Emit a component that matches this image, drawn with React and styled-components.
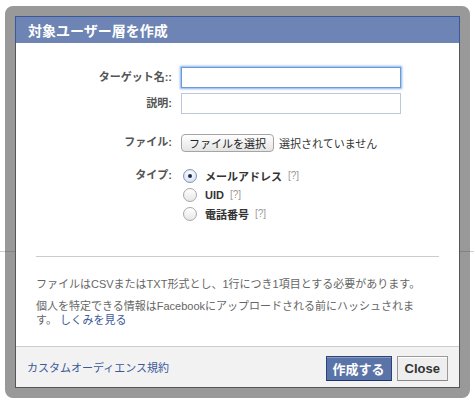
import styled, { createGlobalStyle } from "styled-components";

const GlobalStyle = createGlobalStyle`
    html, body {
        margin: 0;
        padding: 0;
    }
    body {
        width: 474px;
        height: 404px;
        overflow: hidden;
        background: linear-gradient(
            to bottom,
            #fff 251px, #cfcfcf 251px, #cfcfcf 252px, #fff 252px
        );
        font-family: "Liberation Sans", "Noto Sans CJK JP", sans-serif;
        font-size: 11px;
        color: #333;
    }
`

const Page = styled.div`
    padding: 6px 4px 6px 5px;
`
const Frame = styled.div`
    border: 10px solid rgba(70, 70, 70, 0.55);
    border-radius: 8px;
`
const Dialog = styled.div`
    height: 372px;
    box-sizing: border-box;
    display: flex;
    flex-direction: column;
    background: #fff;
    border: 1px solid #555;
    border-top: 0;
`
const Header = styled.div`
    height: 27px;
    box-sizing: border-box;
    margin: 0 -1px;
    padding: 0 12px;
    display: flex;
    align-items: center;
    background: #6d84b4;
    border: 1px solid #3b5998;
    border-bottom: 0;
    color: #fff;
    font-size: 14px;
    font-weight: bold;
`
const Body = styled.div`
    flex: 1;
    padding: 24px 20px 0;
`
const Row = styled.div`
    display: grid;
    grid-template-columns: 136px 1fr;
    column-gap: 9px;
    align-items: ${(p) => (p.$top ? "start" : "center")};
    margin-top: ${(p) => p.$gap || 0}px;
`
const Label = styled.label`
    text-align: right;
    font-weight: bold;
    color: #555;
    line-height: 19px;
`
const Input = styled.input`
    width: 220px;
    height: 21px;
    box-sizing: border-box;
    margin: 0;
    padding: 2px 3px;
    border: 1px solid ${(p) => (p.$focus ? "#6b9ad6" : "#bdc7d8")};
    box-shadow: ${(p) => (p.$focus ? "0 0 2px 1px rgba(90, 150, 225, 0.75)" : "none")};
    outline: none;
    font: inherit;
`
const FileLine = styled.div`
    display: flex;
    align-items: center;
    gap: 5px;
`
const FileButton = styled.button`
    width: 93px;
    height: 18px;
    padding: 0;
    border: 1px solid #a5a5a5;
    border-radius: 4px;
    background: linear-gradient(#ffffff, #e4e4e4);
    font: inherit;
    color: #222;
`
const Options = styled.div`
    display: flex;
    flex-direction: column;
`
const Option = styled.div`
    height: 19px;
    display: flex;
    align-items: center;
    padding-left: 2px;
    font-weight: bold;
    color: #333;
`
const Radio = styled.span`
    width: 14px;
    height: 14px;
    box-sizing: border-box;
    margin-right: 8px;
    border-radius: 50%;
    display: flex;
    align-items: center;
    justify-content: center;
    border: 1px solid ${(p) => (p.$on ? "#7f95bd" : "#a8a8a8")};
    background: ${(p) =>
        p.$on
            ? "radial-gradient(circle at 50% 35%, #ffffff, #c9d8ee)"
            : "linear-gradient(#ffffff, #e6e6e6)"};
    &::after {
        content: "";
        display: ${(p) => (p.$on ? "block" : "none")};
        width: 4px;
        height: 4px;
        border-radius: 50%;
        background: #1e2a44;
    }
`
const Help = styled.span`
    margin-left: 6px;
    font-size: 10px;
    font-weight: normal;
    color: #999;
`
const Divider = styled.hr`
    margin: 33px 0 0;
    border: 0;
    border-top: 1px solid #cccccc;
`
const Note = styled.p`
    max-width: 390px;
    margin: ${(p) => p.$gap}px 0 0;
    line-height: 14px;
    color: #666;
`
const Link = styled.a`
    color: #3b5998;
    text-decoration: none;
    cursor: pointer;
`
const Footer = styled.div`
    height: 41px;
    box-sizing: border-box;
    padding: 0 11px;
    display: flex;
    align-items: center;
    justify-content: space-between;
    background: #f2f2f2;
    border-top: 1px solid #cccccc;
`
const Buttons = styled.div`
    display: flex;
    gap: 5px;
    padding-top: 2px;
`
const Button = styled.button`
    height: 25px;
    padding: 0 ${(p) => (p.$primary ? 6 : 7)}px;
    font: inherit;
    font-size: 13px;
    font-weight: bold;
    border: 1px solid ${(p) => (p.$primary ? "#29447e" : "#999")};
    border-bottom-color: ${(p) => (p.$primary ? "#1a356e" : "#888")};
    background: ${(p) => (p.$primary ? "#5b74a8" : "#eeeeee")};
    color: ${(p) => (p.$primary ? "#fff" : "#333")};
    box-shadow: inset 0 1px 0 ${(p) => (p.$primary ? "#8a9cc2" : "#fff")};
    cursor: pointer;
`

const types = [
    { name: "メールアドレス", on: true },
    { name: "UID" },
    { name: "電話番号" },
]

const App = () => {
    return (
        <Page>
            <GlobalStyle />
            <Frame>
                <Dialog>
                    <Header>対象ユーザー層を作成</Header>
                    <Body>
                        <Row>
                            <Label>ターゲット名::</Label>
                            <Input $focus />
                        </Row>
                        <Row $gap={5}>
                            <Label>説明:</Label>
                            <Input />
                        </Row>
                        <Row $gap={19}>
                            <Label>ファイル:</Label>
                            <FileLine>
                                <FileButton>ファイルを選択</FileButton>
                                <span>選択されていません</span>
                            </FileLine>
                        </Row>
                        <Row $gap={14} $top>
                            <Label>タイプ:</Label>
                            <Options>
                                {types.map((t) => (
                                    <Option key={t.name}>
                                        <Radio $on={t.on} />
                                        {t.name}
                                        <Help>[?]</Help>
                                    </Option>
                                ))}
                            </Options>
                        </Row>
                        <Divider />
                        <Note $gap={20}>
                            ファイルはCSVまたはTXT形式とし、1行につき1項目とする必要があります。
                        </Note>
                        <Note $gap={8}>
                            個人を特定できる情報はFacebookにアップロードされる前にハッシュされます。 <Link>しくみを見る</Link>
                        </Note>
                    </Body>
                    <Footer>
                        <Link>カスタムオーディエンス規約</Link>
                        <Buttons>
                            <Button $primary>作成する</Button>
                            <Button>Close</Button>
                        </Buttons>
                    </Footer>
                </Dialog>
            </Frame>
        </Page>
    )
}

export default App;
